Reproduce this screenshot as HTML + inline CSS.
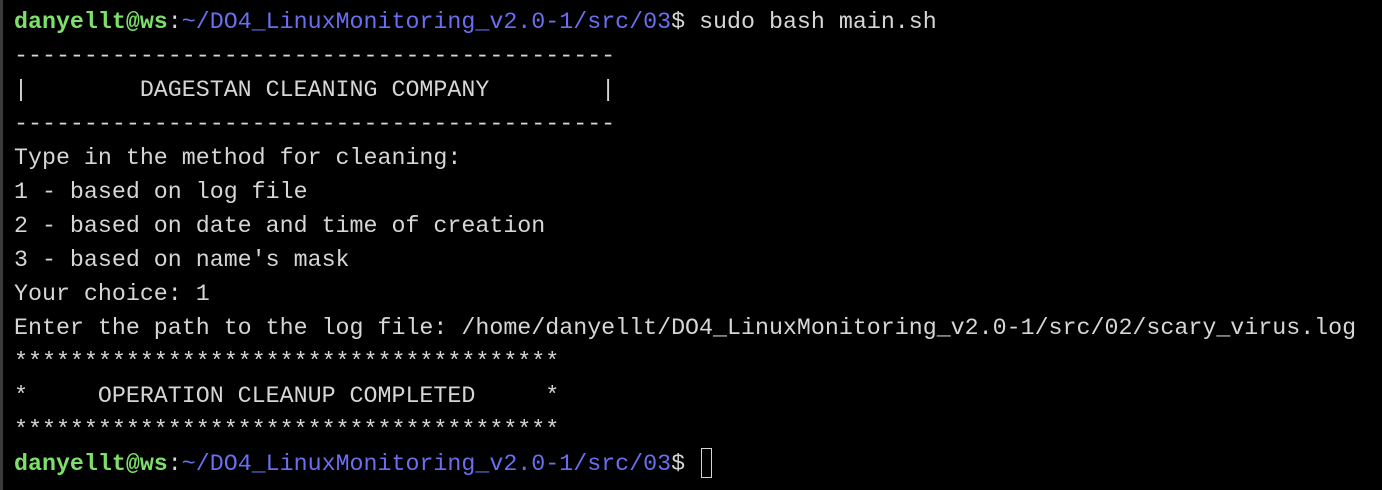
<!DOCTYPE html>
<html><head><meta charset="utf-8"><style>
html,body{margin:0;padding:0;background:#000;}
body{width:1382px;height:490px;overflow:hidden;position:relative;}
.l{position:absolute;left:0;top:0;width:3px;height:490px;background:#3a3a3a;}
pre{margin:0;position:absolute;left:14px;top:5px;font-family:"Liberation Mono",monospace;font-size:23.3px;line-height:34px;color:#d6d6d6;}
.g{color:#7ee06a;font-weight:bold;}
.b{color:#6a6ef0;}
.c{display:inline-block;width:11px;height:30px;border:1.5px solid #d6d6d6;vertical-align:-8px;margin-left:2px;box-sizing:border-box;}
</style></head><body><div class="l"></div>
<pre><span class="g">danyellt@ws</span>:<span class="b">~/DO4_LinuxMonitoring_v2.0-1/src/03</span>$ sudo bash main.sh
-------------------------------------------
|        DAGESTAN CLEANING COMPANY        |
-------------------------------------------
Type in the method for cleaning:
1 - based on log file
2 - based on date and time of creation
3 - based on name's mask
Your choice: 1
Enter the path to the log file: /home/danyellt/DO4_LinuxMonitoring_v2.0-1/src/02/scary_virus.log
***************************************
*     OPERATION CLEANUP COMPLETED     *
***************************************
<span class="g">danyellt@ws</span>:<span class="b">~/DO4_LinuxMonitoring_v2.0-1/src/03</span>$ <span class="c"></span></pre>
</body></html>
